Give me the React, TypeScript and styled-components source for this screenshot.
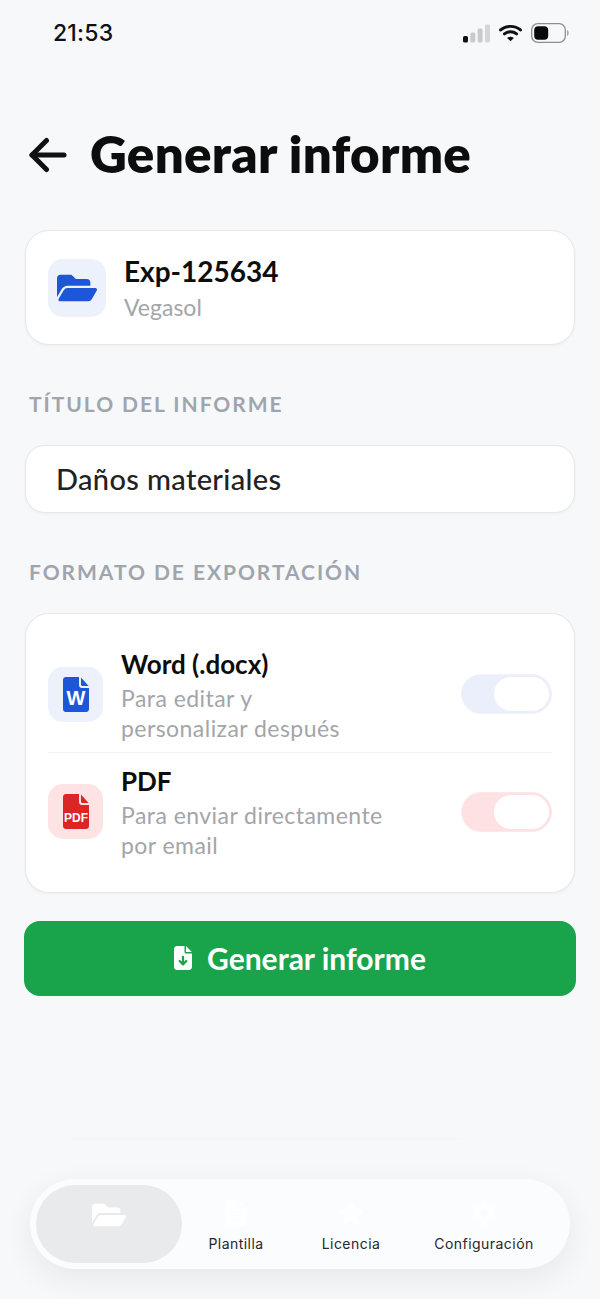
import React from "react";
import styled, { createGlobalStyle } from "styled-components";
import { FaFolderOpen, FaFileAlt, FaCog, FaStar } from "react-icons/fa";
import { FaFileArrowDown } from "react-icons/fa6";

const Global = createGlobalStyle`
  html, body { margin: 0; padding: 0; background: #f7f8fa; }
  * { box-sizing: border-box; }
`;

const Page = styled.div`
  width: 600px;
  height: 1299px;
  overflow: hidden;
  background: #f7f8fa;
  font-family: "Lato", "Liberation Sans", sans-serif;
  display: flex;
  flex-direction: column;
`;

const StatusBar = styled.div`
  height: 66px;
  padding: 0 31px 0 53px;
  display: flex;
  align-items: center;
  justify-content: space-between;
`;

const Time = styled.span`
  font-family: "Inter", sans-serif;
  font-size: 23px;
  font-weight: 500;
  color: #111;
  letter-spacing: 0.2px;
`;

const StatusIcons = styled.div`
  display: flex;
  align-items: center;
  gap: 9px;
`;

const Header = styled.div`
  margin-top: 51px;
  padding-left: 29px;
  display: flex;
  align-items: center;
  gap: 23px;
  height: 72px;
`;

const ArrowSvg = styled.svg`
  flex: none;
  margin-top: 4px;
`;

const Title = styled.h1`
  margin: 0;
  font-size: 51px;
  font-weight: 800;
  color: #0d0d0d;
  letter-spacing: 0.3px;
`;

const Body = styled.div`
  margin-top: 41px;
  padding: 0 25px;
  display: flex;
  flex-direction: column;
`;

const Card = styled.div`
  background: #fff;
  border: 1px solid #e6e8ec;
  border-radius: 24px;
  box-shadow: 0 1px 3px rgba(20, 30, 50, 0.05);
`;

const CaseCard = styled(Card)`
  height: 115px;
  padding: 0 22px;
  display: flex;
  align-items: center;
  gap: 18px;
`;

const IconTile = styled.div<{ $bg: string; $size: number }>`
  width: ${(p) => p.$size}px;
  height: ${(p) => p.$size}px;
  flex: none;
  border-radius: 15px;
  background: ${(p) => p.$bg};
  display: flex;
  align-items: center;
  justify-content: center;
`;

const TextCol = styled.div`
  display: flex;
  flex-direction: column;
`;

const CaseTitle = styled.div`
  font-size: 28px;
  font-weight: 700;
  color: #0d0d0d;
  line-height: 34px;
`;

const CaseSub = styled.div`
  margin-top: 4px;
  font-size: 23px;
  color: #a3a5a9;
  line-height: 30px;
`;

const SectionLabel = styled.div<{ $top: number }>`
  margin-top: ${(p) => p.$top}px;
  margin-bottom: 28px;
  padding-left: 4px;
  font-size: 21px;
  font-weight: 700;
  letter-spacing: 1.95px;
  line-height: 26px;
  color: #9fa5ad;
`;

const Input = styled(Card)`
  height: 68px;
  border-radius: 20px;
  padding: 0 30px 2px;
  display: flex;
  align-items: center;
  font-size: 29px;
  font-weight: 500;
  letter-spacing: 0.35px;
  color: #222;
`;

const FormatCard = styled(Card)`
  height: 280px;
  padding: 22px 22px 0;
`;

const FormatRow = styled.div<{ $divider?: boolean }>`
  height: 117px;
  display: flex;
  align-items: center;
  gap: 18px;
  border-bottom: ${(p) => (p.$divider ? "1px solid #f1f2f4" : "none")};
`;

const FormatText = styled(TextCol)`
  flex: 1;
  margin-top: 2px;
`;

const FormatTitle = styled.div`
  font-size: 26px;
  font-weight: 700;
  color: #0d0d0d;
  line-height: 32px;
`;

const FormatSub = styled.div`
  margin-top: 3px;
  font-size: 23px;
  line-height: 30px;
  letter-spacing: 0.45px;
  color: #a3a5a9;
`;

const Toggle = styled.div<{ $bg: string; $edge: string }>`
  width: 91px;
  height: 40px;
  flex: none;
  border-radius: 20px;
  background: ${(p) => p.$bg};
  display: flex;
  justify-content: flex-end;
  padding: 2px 2px 2px 0;
  border: 1px solid ${(p) => p.$edge};
`;

const Knob = styled.div`
  width: 55px;
  height: 100%;
  border-radius: 18px;
  background: #fff;
`;

const GenerateButton = styled.button`
  margin: 28px -1px 0;
  height: 75px;
  border: none;
  border-radius: 16px;
  background: #19a44c;
  color: #fff;
  font-family: inherit;
  font-size: 30px;
  font-weight: 700;
  display: flex;
  align-items: center;
  justify-content: center;
  gap: 12px;
  padding: 0 3px 2px 0;
`;

const FaintLine = styled.div`
  margin: 142px 140px 0 70px;
  height: 2px;
  background: #f5f6f8;
`;

const Nav = styled.nav`
  margin: 39px 30px 0;
  height: 90px;
  border-radius: 45px;
  background: #fbfcfd;
  box-shadow: 0 10px 30px rgba(40, 50, 70, 0.08);
  padding: 6px;
  display: flex;
  align-items: stretch;
`;

const NavItem = styled.div<{ $active?: boolean; $width: number }>`
  width: ${(p) => p.$width}px;
  flex: none;
  border-radius: 39px;
  background: ${(p) => (p.$active ? "#e9eaec" : "transparent")};
  display: flex;
  flex-direction: column;
  align-items: center;
  padding-top: ${(p) => (p.$active ? 13 : 15)}px;
  color: ${(p) => (p.$active ? "#fff" : "#fdfeff")};
`;

const NavLabel = styled.span`
  margin-top: 9px;
  font-family: "Inter", sans-serif;
  font-size: 14px;
  font-weight: 400;
  line-height: 18px;
  letter-spacing: 0.46px;
  color: #26282c;
  white-space: nowrap;
`;

const BackArrow = () => (
  <ArrowSvg width="38" height="36" viewBox="0 0 38 36" fill="none" stroke="#111" strokeWidth="5" strokeLinecap="round" strokeLinejoin="round">
    <path d="M3 18H35" />
    <path d="M17.5 3.5L3 18L17.5 32.5" />
  </ArrowSvg>
);

const SignalBars = () => (
  <svg width="27" height="19" viewBox="0 0 27 19">
    <rect x="0" y="12" width="5" height="6.5" rx="1.5" fill="#111" />
    <rect x="7.3" y="8.5" width="5" height="10" rx="1.5" fill="#c9cacc" />
    <rect x="14.6" y="4.5" width="5" height="14" rx="1.5" fill="#c9cacc" />
    <rect x="22" y="0.5" width="5" height="18" rx="1.5" fill="#d4d5d7" />
  </svg>
);

const WifiGlyph = () => (
  <svg width="23" height="18" viewBox="0 0 22 17" fill="none" stroke="#111" strokeWidth="2.8" strokeLinecap="round">
    <path d="M1.5 5.6C6.8 1 15.2 1 20.5 5.6" />
    <path d="M5.2 9.4C8.5 6.7 13.5 6.7 16.8 9.4" />
    <path d="M11 16.5L7.8 13.2C9.8 11.8 12.2 11.8 14.2 13.2Z" fill="#111" stroke="none" />
  </svg>
);

const Battery = () => (
  <svg width="38" height="20" viewBox="0 0 38 20">
    <rect x="0.7" y="0.7" width="33.6" height="18.6" rx="6" fill="none" stroke="#8d8e90" strokeWidth="1.3" />
    <rect x="3.2" y="3.2" width="14" height="13.6" rx="4" fill="#0a0a0a" />
    <path d="M36 7C37.2 7.6 37.7 8.8 37.7 10C37.7 11.2 37.2 12.4 36 13Z" fill="#a5a6a8" />
  </svg>
);

const DocIcon = ({ color, label, size }: { color: string; label: string; size: number }) => (
  <svg width="26" height="35" viewBox="0 0 26 35">
    <path
      d="M3 0H16V8C16 9.7 17.3 11 19 11H26V32C26 33.7 24.7 35 23 35H3C1.3 35 0 33.7 0 32V3C0 1.3 1.3 0 3 0Z"
      fill={color}
    />
    <path d="M18 0.6L25.6 9H19.5C18.7 9 18 8.3 18 7.5Z" fill={color} />
    <text
      x="13"
      y="28"
      textAnchor="middle"
      fontFamily="'Liberation Sans', sans-serif"
      fontWeight="700"
      fontSize={size}
      fill="#fff"
    >
      {label}
    </text>
  </svg>
);

export default function App() {
  return (
    <Page>
      <Global />
      <StatusBar>
        <Time>21:53</Time>
        <StatusIcons>
          <SignalBars />
          <WifiGlyph />
          <Battery />
        </StatusIcons>
      </StatusBar>

      <Header>
        <BackArrow />
        <Title>Generar informe</Title>
      </Header>

      <Body>
        <CaseCard>
          <IconTile $bg="#edf1fb" $size={58}>
            <FaFolderOpen size={40} color="#1d57d8" />
          </IconTile>
          <TextCol>
            <CaseTitle>Exp-125634</CaseTitle>
            <CaseSub>Vegasol</CaseSub>
          </TextCol>
        </CaseCard>

        <SectionLabel $top={46}>TÍTULO DEL INFORME</SectionLabel>
        <Input>Daños materiales</Input>

        <SectionLabel $top={46}>FORMATO DE EXPORTACIÓN</SectionLabel>
        <FormatCard>
          <FormatRow $divider>
            <IconTile $bg="#edf1fb" $size={55}>
              <DocIcon color="#1d57d8" label="W" size={20} />
            </IconTile>
            <FormatText>
              <FormatTitle>Word (.docx)</FormatTitle>
              <FormatSub>
                Para editar y
                <br />
                personalizar después
              </FormatSub>
            </FormatText>
            <Toggle $bg="#ebeefb" $edge="#f1f2fa">
              <Knob />
            </Toggle>
          </FormatRow>
          <FormatRow>
            <IconTile $bg="#fde3e3" $size={55}>
              <DocIcon color="#dc2626" label="PDF" size={12} />
            </IconTile>
            <FormatText>
              <FormatTitle>PDF</FormatTitle>
              <FormatSub>
                Para enviar directamente
                <br />
                por email
              </FormatSub>
            </FormatText>
            <Toggle $bg="#fde1e3" $edge="#fbe9ea">
              <Knob />
            </Toggle>
          </FormatRow>
        </FormatCard>

        <GenerateButton>
          <FaFileArrowDown size={24} />
          Generar informe
        </GenerateButton>
      </Body>

      <FaintLine />

      <Nav>
        <NavItem $active $width={146}>
          <FaFolderOpen size={34} />
        </NavItem>
        <NavItem $width={108}>
          <FaFileAlt size={26} />
          <NavLabel>Plantilla</NavLabel>
        </NavItem>
        <NavItem $width={122}>
          <FaStar size={26} />
          <NavLabel>Licencia</NavLabel>
        </NavItem>
        <NavItem $width={144}>
          <FaCog size={26} />
          <NavLabel>Configuración</NavLabel>
        </NavItem>
      </Nav>
    </Page>
  );
}
